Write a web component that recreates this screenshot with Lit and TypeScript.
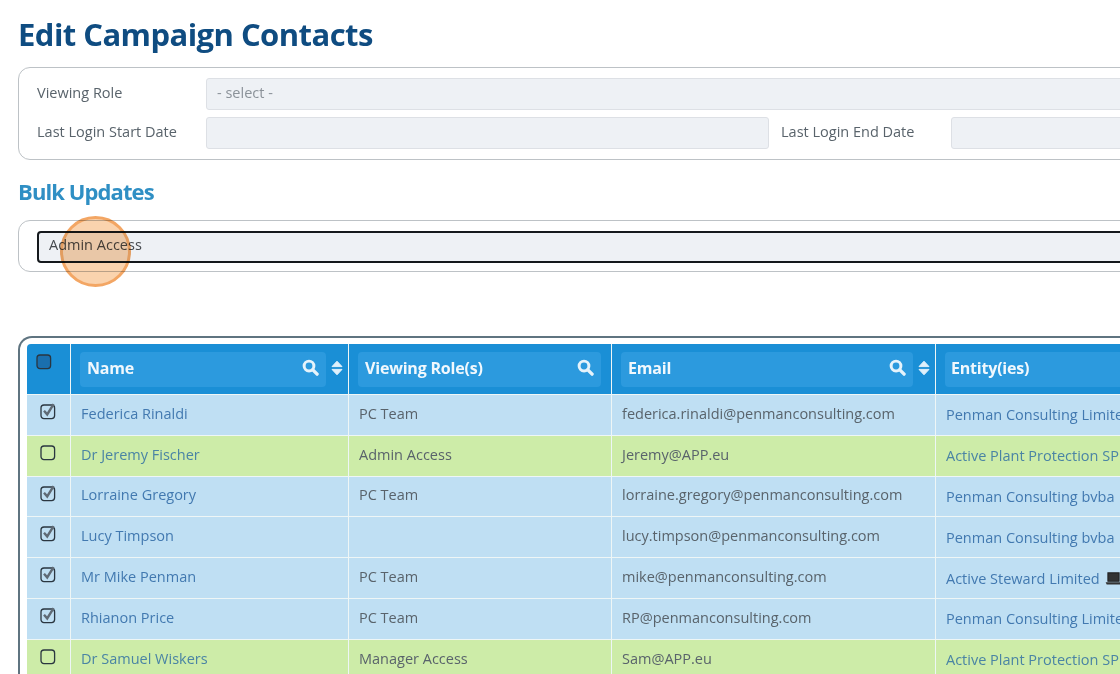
import { LitElement, html, css, svg } from "lit";
import { customElement } from "lit/decorators.js";

const search = html`<svg class="ic" viewBox="0 0 16 16" width="17" height="17"><circle cx="6.6" cy="6.6" r="4.6" fill="none" stroke="#e6f3fb" stroke-width="2.8"/><path d="M10.2 10.2L14.2 14.2" stroke="#e6f3fb" stroke-width="3.2" stroke-linecap="round"/></svg>`;
const sort = html`<svg class="sort" viewBox="0 0 12 16" width="12" height="16"><path d="M6 1.2L11 6.6H1Z M1 9.4H11L6 14.8Z" fill="#dff0fb" stroke="#dff0fb" stroke-width="1" stroke-linejoin="round"/></svg>`;
const laptop = html`<svg class="lap" viewBox="0 0 18 14" width="17" height="13"><path d="M3 1h12v9H3z" fill="#333" stroke="#222" stroke-width="1.2"/><path d="M0.5 11h17l-1.2 2.4H1.7z" fill="#333"/></svg>`;
const check = (on: boolean) => html`<svg class="cb" viewBox="0 0 16 18" width="16" height="18">
  <rect x="1" y="3" width="13.6" height="13.6" rx="3" fill="none" stroke="#2a3640" stroke-width="1.3"/>
  ${on ? svg`<path d="M4 8.8L7.2 12.4L13.6 2.2" fill="none" stroke="#5f6a75" stroke-width="2.4"/>` : ""}
</svg>`;

const rows = [
  { on: true, g: false, name: "Federica Rinaldi", role: "PC Team", email: "federica.rinaldi@penmanconsulting.com", ent: "Penman Consulting Limited", lap: false },
  { on: false, g: true, name: "Dr Jeremy Fischer", role: "Admin Access", email: "Jeremy@APP.eu", ent: "Active Plant Protection SPRL", lap: false },
  { on: true, g: false, name: "Lorraine Gregory", role: "PC Team", email: "lorraine.gregory@penmanconsulting.com", ent: "Penman Consulting bvba", lap: true },
  { on: true, g: false, name: "Lucy Timpson", role: "", email: "lucy.timpson@penmanconsulting.com", ent: "Penman Consulting bvba", lap: true },
  { on: true, g: false, name: "Mr Mike Penman", role: "PC Team", email: "mike@penmanconsulting.com", ent: "Active Steward Limited", lap: true },
  { on: true, g: false, name: "Rhianon Price", role: "PC Team", email: "RP@penmanconsulting.com", ent: "Penman Consulting Limited", lap: false },
  { on: false, g: true, name: "Dr Samuel Wiskers", role: "Manager Access", email: "Sam@APP.eu", ent: "Active Plant Protection SPRL", lap: false },
];

@customElement("app-root")
export class AppRoot extends LitElement {
  static styles = css`
    :host { display: block; width: 1120px; height: 674px; overflow: hidden; background: #fff; position: relative;
      font-family: "Open Sans", "Noto Sans", sans-serif; font-size: 14.5px; color: #59636b; }
    .page { width: 1400px; padding: 14px 0 0 18px; box-sizing: border-box; }
    h1 { margin: 0; font-size: 31px; line-height: 41px; font-weight: 700; color: #0f4c81; letter-spacing: -0.55px; }
    .box { border: 1.5px solid #bdc2c6; border-radius: 12px; box-sizing: border-box; }
    .filters { margin-top: 12px; height: 93px; padding: 9.5px 18px; display: flex; flex-direction: column; gap: 7px; }
    .frow { display: flex; align-items: center; height: 32px; line-height: 28px; }
    .lbl { width: 169px; flex: none; height: 28px; margin-top: -2px; }
    .inp { background: #eef1f5; border: 1px solid #dde0e5; border-radius: 3px; height: 32px; box-sizing: border-box; }
    .sel { flex: 1; padding-left: 10px; line-height: 27px; color: #8b9299; }
    .d1 { width: 563px; flex: none; }
    .lbl2 { width: 182px; flex: none; padding-left: 12px; box-sizing: border-box; height: 28px; margin-top: -2px; }
    .d2 { flex: 1; }
    h2 { margin: 16px 0 0; font-size: 22px; line-height: 30px; font-weight: 700; color: #2f8fc4; letter-spacing: -0.9px; }
    .bulk { margin-top: 14px; height: 52px; padding: 9.5px 18px; }
    .focus { height: 32px; background: #eef1f5; border: 2px solid #15191d; border-radius: 4px; box-sizing: border-box; padding-left: 10px; line-height: 24px; color: #45494e; }
    .card { margin-top: 64px; border: 2px solid #5f7480; border-bottom: none; border-radius: 14px 14px 0 0; padding: 6px 7px 0; height: 340px; box-sizing: border-box; }
    .row { display: grid; grid-template-columns: 43px 278px 263px 324px 1fr; height: 40.8px; border-top: 1px solid #eef6f6; box-sizing: border-box; background: #bfdff3; }
    .row.g { background: #cdeca8; }
    .row.head { height: 50px; background: #1a8fd6; border-top: none; border-radius: 4px 4px 0 0; }
    .c { display: flex; align-items: center; padding-left: 10px; padding-bottom: 3px; border-left: 1px solid #eef6f6; min-width: 0; white-space: nowrap; box-sizing: border-box; }
    .c:first-child { border-left: none; padding-left: 13px; align-items: flex-start; padding-top: 7px; }
    .head .c:first-child { padding-top: 8px; }
    .head .c { padding-left: 9px; padding-right: 5px; gap: 5px; padding-bottom: 0; }
    .head .c.nosort { padding-right: 10px; }
    .pill { flex: 1; height: 35px; background: #2c9ade; border-radius: 4px; display: flex; align-items: center; justify-content: space-between; padding: 0 7px 3px 7px; box-sizing: border-box; font-weight: 700; font-size: 16px; color: #f1f8fd; letter-spacing: -0.2px; }
    .head .c.ent-h { padding-left: 9px; }
    .ent-h .pill { padding-left: 6px; }
    .ic { display: block; flex: none; }
    .sort { display: block; flex: none; margin-top: -2px; }
    .link { color: #4279b0; }
    .ent { color: #4279b0; padding-top: 3px; }
    .g .link, .g .ent { color: #4a84a4; }
    .lap { margin-left: 5px; vertical-align: -1px; }
    .hcb rect { fill: #1a6fae; }
    .spot { position: absolute; left: 60px; top: 216px; width: 71px; height: 71px; box-sizing: border-box; border-radius: 50%; border: 3px solid #f3a664; background: #fad3ae; mix-blend-mode: multiply; }
  `;
  render() {
    return html`<div class="page">
      <h1>Edit Campaign Contacts</h1>
      <div class="box filters">
        <div class="frow"><div class="lbl">Viewing Role</div><div class="inp sel">- select -</div></div>
        <div class="frow"><div class="lbl">Last Login Start Date</div><div class="inp d1"></div><div class="lbl2">Last Login End Date</div><div class="inp d2"></div></div>
      </div>
      <h2>Bulk Updates</h2>
      <div class="box bulk"><div class="focus">Admin Access</div></div>
      <div class="card">
        <div class="row head">
          <div class="c"><span class="hcb">${check(false)}</span></div>
          <div class="c"><div class="pill">Name ${search}</div>${sort}</div>
          <div class="c nosort"><div class="pill">Viewing Role(s) ${search}</div></div>
          <div class="c"><div class="pill">Email ${search}</div>${sort}</div>
          <div class="c ent-h"><div class="pill">Entity(ies)</div></div>
        </div>
        ${rows.map(r => html`<div class="row ${r.g ? "g" : ""}">
          <div class="c">${check(r.on)}</div>
          <div class="c link">${r.name}</div>
          <div class="c">${r.role}</div>
          <div class="c">${r.email}</div>
          <div class="c ent">${r.ent}${r.lap ? laptop : ""}</div>
        </div>`)}
      </div>
    </div>
    <div class="spot"></div>`;
  }
}
